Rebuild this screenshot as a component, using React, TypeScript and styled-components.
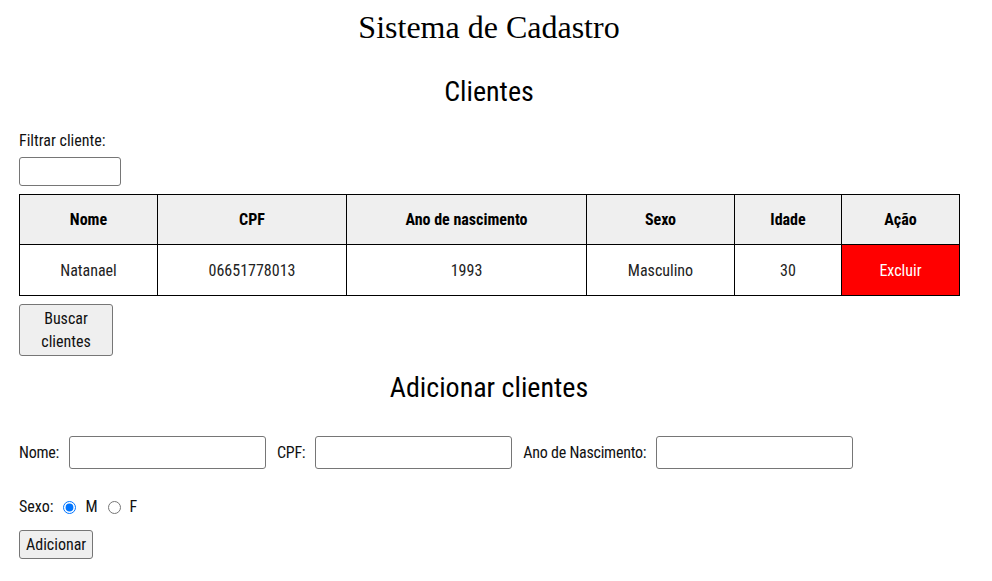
import React, { useState } from "react";
import styled, { createGlobalStyle } from "styled-components";

const FONT = `"Roboto Condensed", "Open Sans", "DejaVu Sans Condensed", sans-serif`;

const Global = createGlobalStyle`
  html, body { margin: 0; padding: 0; background: #fff; }
  body { font-family: ${FONT}; font-size: 16px; color: #000; }
  * { box-sizing: border-box; }
  input, button { font-family: ${FONT}; }
`;

const Page = styled.div`
  width: 940px;
  margin-left: 19px;
  display: flex;
  flex-direction: column;
  align-items: flex-start;
`;

const Title = styled.h1`
  align-self: stretch;
  margin: 9px 0 0;
  font-family: "Liberation Serif", "Times New Roman", serif;
  font-weight: 400;
  font-size: 32px;
  line-height: 37px;
  text-align: center;
`;

const SectionTitle = styled.h2<{ $top: number }>`
  align-self: stretch;
  margin: ${(p) => p.$top}px 0 0;
  font-weight: 400;
  font-size: 28px;
  line-height: 34px;
  text-align: center;
`;

const FilterLabel = styled.label`
  display: block;
  margin-top: 22px;
  line-height: 20px;
  font-size: 16px;
  color: #111;
`;

const TextInput = styled.input<{ $w: number; $h: number }>`
  width: ${(p) => p.$w}px;
  height: ${(p) => p.$h}px;
  border: 1px solid #767676;
  border-radius: 3px;
  padding: 1px 4px;
  font-size: 16px;
  background: #fff;
  outline: none;
`;

const FilterInput = styled(TextInput)`
  margin-top: 6px;
`;

const Table = styled.table`
  margin-top: 8px;
  width: 940px;
  border-collapse: collapse;
  table-layout: fixed;
`;

const HeadCell = styled.th`
  height: 50px;
  border: 1px solid #000;
  background: #efefef;
  font-weight: 700;
  font-size: 16px;
  text-align: center;
  vertical-align: middle;
  padding: 0 8px;
`;

const Cell = styled.td`
  height: 51px;
  border: 1px solid #000;
  font-size: 16px;
  text-align: center;
  vertical-align: middle;
  padding: 0 8px;
  color: #222;
`;

const DeleteCell = styled.td`
  height: 51px;
  border: 1px solid #000;
  background: #ff0000;
  padding: 0;
  vertical-align: middle;
`;

const DeleteButton = styled.button`
  width: 100%;
  height: 49px;
  border: none;
  background: transparent;
  color: #fff;
  font-size: 16px;
  cursor: pointer;
`;

const GrayButton = styled.button<{ $w?: number; $h: number; $top: number }>`
  margin-top: ${(p) => p.$top}px;
  width: ${(p) => (p.$w ? `${p.$w}px` : "auto")};
  height: ${(p) => p.$h}px;
  padding: 0 ${(p) => (p.$w ? 12 : 6)}px;
  background: #efefef;
  border: 1px solid #767676;
  border-radius: 3px;
  font-size: 16px;
  line-height: 23px;
  color: #111;
`;

const FormRow = styled.div`
  margin-top: 31px;
  display: flex;
  align-items: center;
  gap: 11px;
`;

const Field = styled.div`
  display: flex;
  align-items: center;
  gap: 10px;
`;

const FieldLabel = styled.label`
  font-size: 16px;
  line-height: 20px;
  letter-spacing: -0.25px;
  color: #111;
`;

const RadioRow = styled.div`
  margin-top: 28px;
  display: flex;
  align-items: center;
  height: 20px;
  font-size: 16px;
  color: #111;
`;

const Radio = styled.input`
  width: 13px;
  height: 13px;
  margin: 0 9px 0 10px;
  accent-color: #0075ff;
`;

const RadioText = styled.span`
  line-height: 20px;
`;

const cols = [138, 189, 240, 148, 107, 118];

export default function App() {
  const [sexo, setSexo] = useState("M");
  return (
    <>
      <Global />
      <Page>
        <Title>Sistema de Cadastro</Title>
        <SectionTitle $top={29}>Clientes</SectionTitle>
        <FilterLabel htmlFor="filtro">Filtrar cliente:</FilterLabel>
        <FilterInput id="filtro" $w={102} $h={29} />
        <Table>
          <colgroup>
            {cols.map((w, i) => (
              <col key={i} style={{ width: w }} />
            ))}
          </colgroup>
          <thead>
            <tr>
              <HeadCell>Nome</HeadCell>
              <HeadCell>CPF</HeadCell>
              <HeadCell>Ano de nascimento</HeadCell>
              <HeadCell>Sexo</HeadCell>
              <HeadCell>Idade</HeadCell>
              <HeadCell>Ação</HeadCell>
            </tr>
          </thead>
          <tbody>
            <tr>
              <Cell>Natanael</Cell>
              <Cell>06651778013</Cell>
              <Cell>1993</Cell>
              <Cell>Masculino</Cell>
              <Cell>30</Cell>
              <DeleteCell>
                <DeleteButton>Excluir</DeleteButton>
              </DeleteCell>
            </tr>
          </tbody>
        </Table>
        <GrayButton $w={94} $h={52} $top={8}>
          Buscar clientes
        </GrayButton>
        <SectionTitle $top={15}>Adicionar clientes</SectionTitle>
        <FormRow>
          <Field>
            <FieldLabel htmlFor="nome">Nome:</FieldLabel>
            <TextInput id="nome" $w={197} $h={33} />
          </Field>
          <Field>
            <FieldLabel htmlFor="cpf">CPF:</FieldLabel>
            <TextInput id="cpf" $w={197} $h={33} />
          </Field>
          <Field>
            <FieldLabel htmlFor="ano">Ano de Nascimento:</FieldLabel>
            <TextInput id="ano" $w={197} $h={33} />
          </Field>
        </FormRow>
        <RadioRow>
          <RadioText>Sexo:</RadioText>
          <Radio type="radio" name="sexo" checked={sexo === "M"} onChange={() => setSexo("M")} />
          <RadioText>M</RadioText>
          <Radio type="radio" name="sexo" checked={sexo === "F"} onChange={() => setSexo("F")} />
          <RadioText>F</RadioText>
        </RadioRow>
        <GrayButton $h={29} $top={13}>
          Adicionar
        </GrayButton>
      </Page>
    </>
  );
}
